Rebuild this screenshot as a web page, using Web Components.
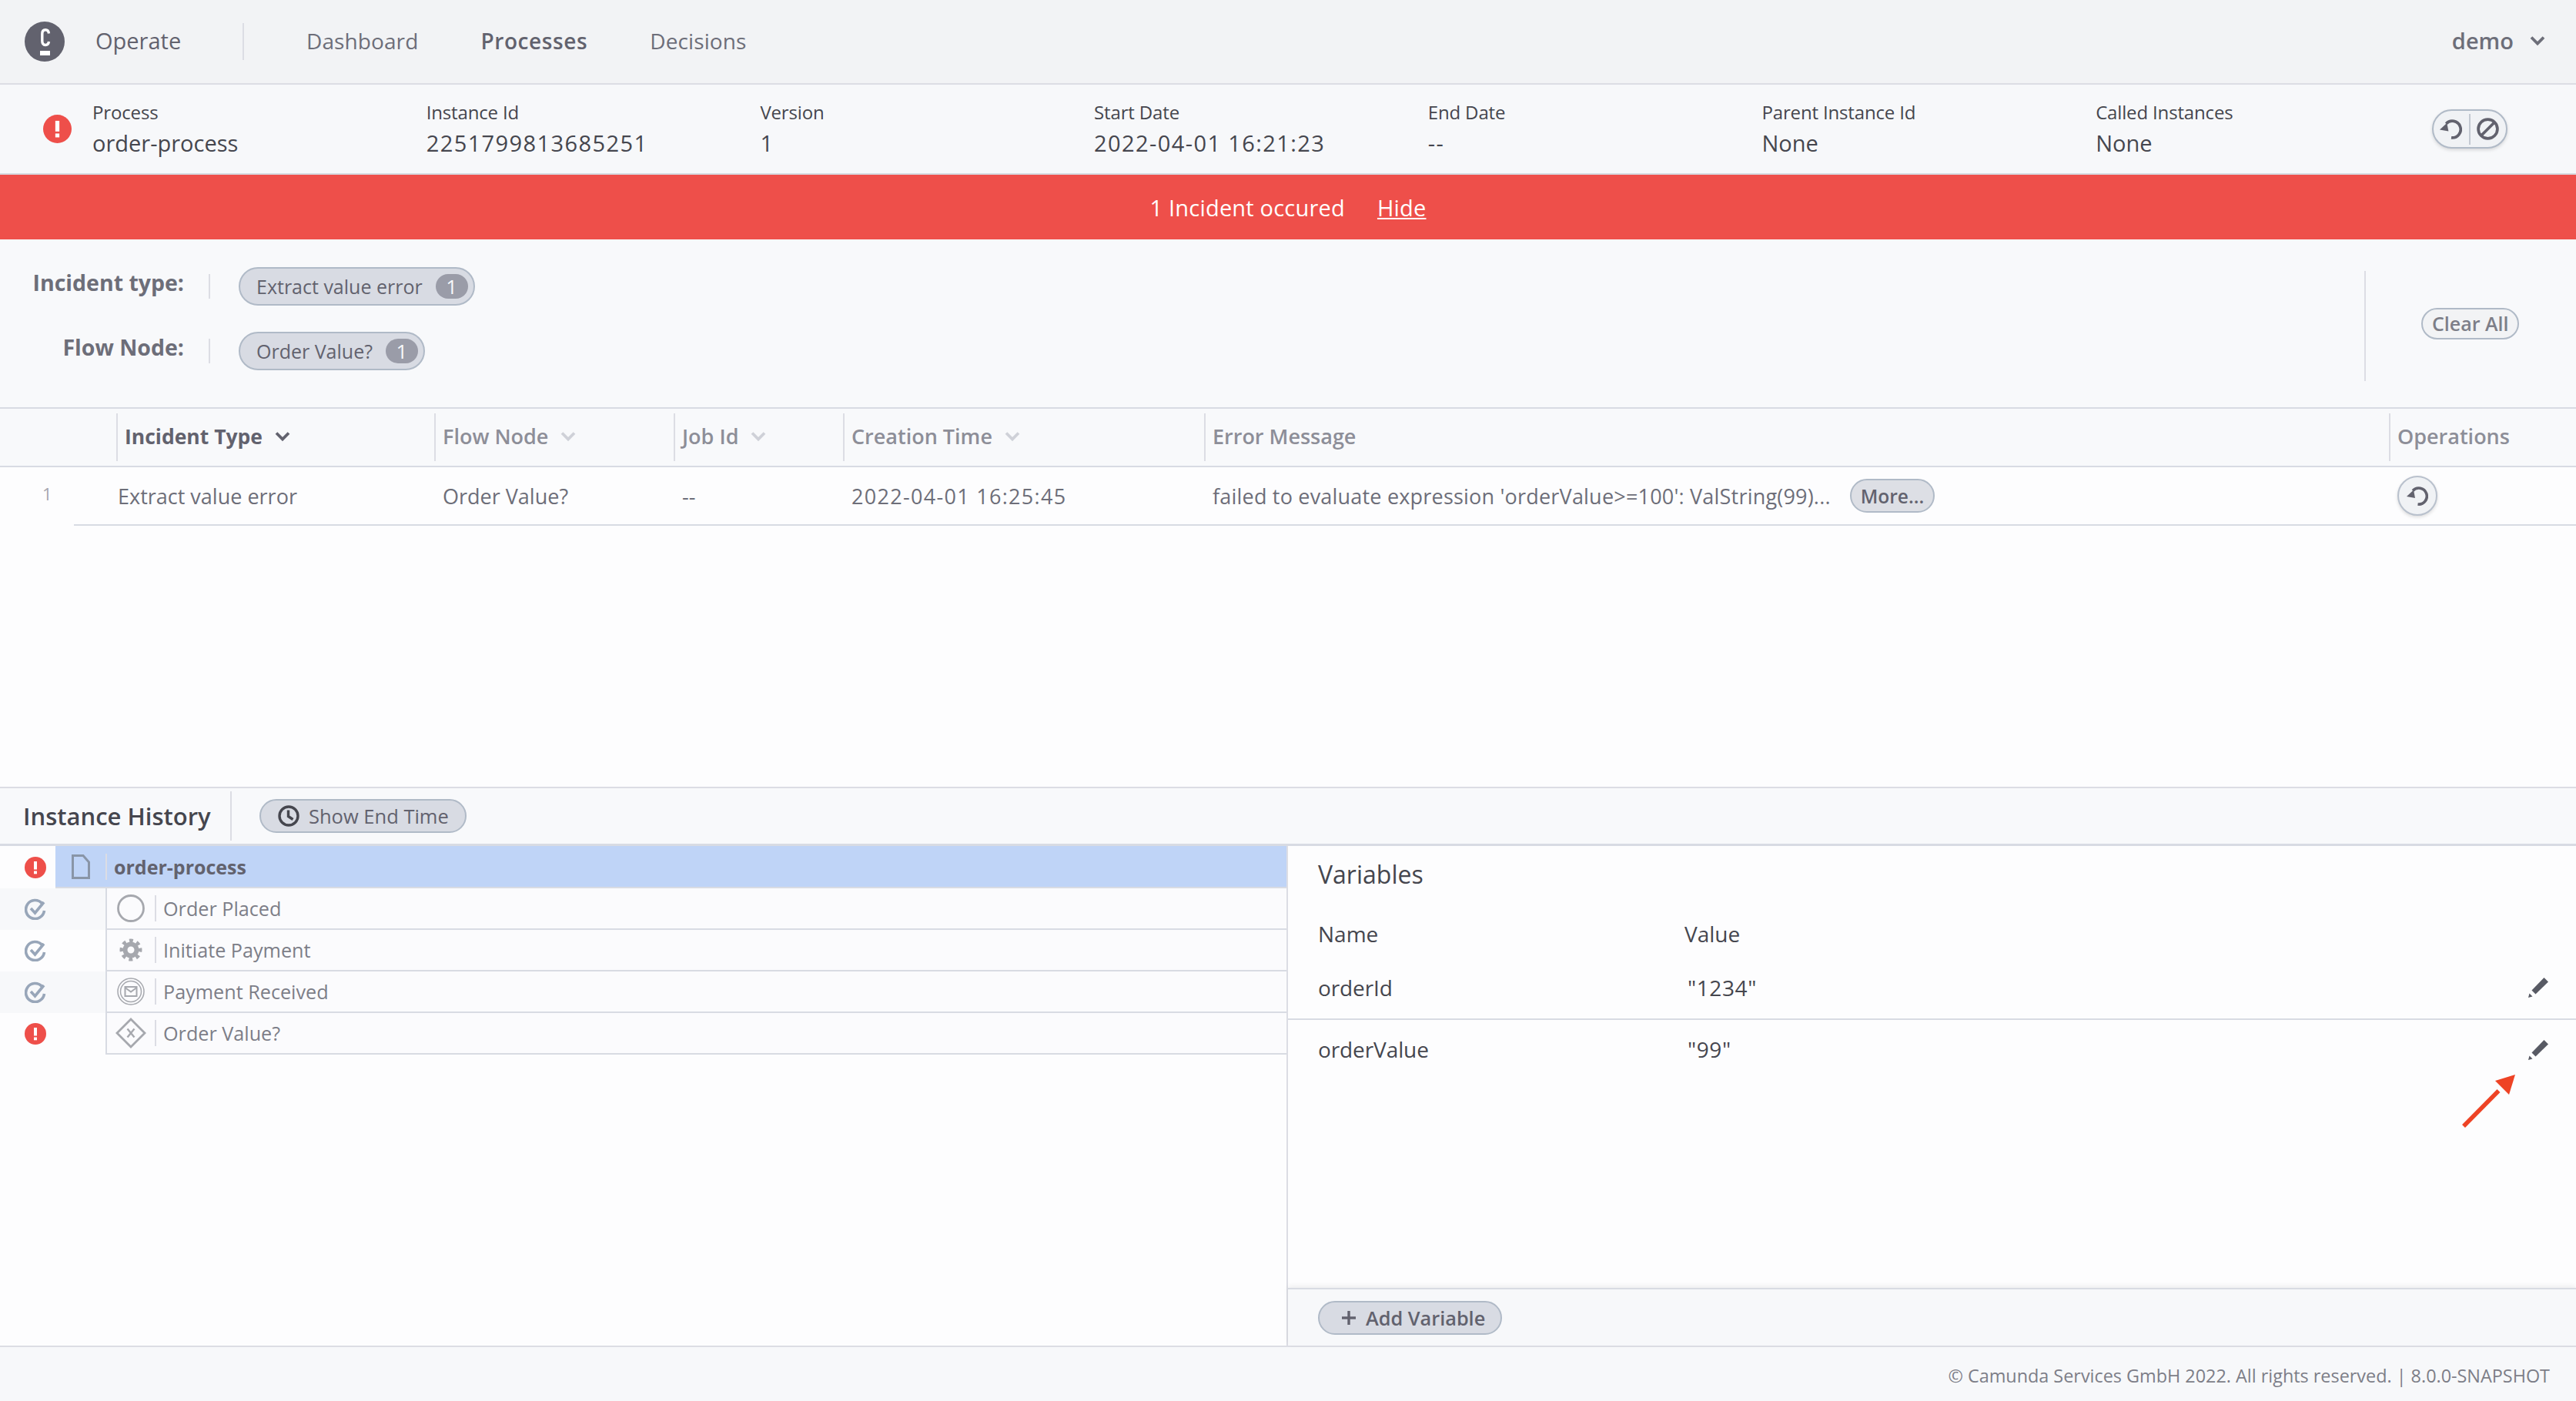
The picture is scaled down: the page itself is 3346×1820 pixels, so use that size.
<!DOCTYPE html>
<html lang="en">
<head>
<meta charset="utf-8">
<title>Operate</title>
<style>
  html, body { margin: 0; height: 100%; }
  body {
    font-family: "Open Sans", "Liberation Sans", sans-serif;
    font-size: 29px;
    color: #62626e;
    background: #fdfdfe;
  }
</style>
</head>
<body>
<operate-app></operate-app>

<script>
const ICONS = {
  error: `<svg viewBox="0 0 28 28"><circle cx="14" cy="14" r="14" fill="#ee4f4a"/><rect x="12" y="6" width="4" height="10.5" fill="#fff"/><rect x="12" y="18.5" width="4" height="3.8" fill="#fff"/></svg>`,
  check: `<svg viewBox="0 0 28 28" fill="none" stroke="#98a6b9" stroke-width="3.6"><path d="M22.500 6.500A12 12 0 1 0 25.500 16"/><path d="M8 13l5.500 6L25 5"/></svg>`,
  retry: `<svg viewBox="0 0 28 28" fill="none"><path d="M8 7.500A10.500 10.500 0 1 1 14.500 25" stroke="#62626e" stroke-width="3.6"/><path d="M0 15L9 6.500l2 10.500z" fill="#62626e"/></svg>`,
  cancel: `<svg viewBox="0 0 28 28" fill="none" stroke="#62626e" stroke-width="3.6"><circle cx="14" cy="14" r="12"/><path d="M6 22L22 6"/></svg>`,
  chevron: `<svg viewBox="0 0 20 14" fill="none" stroke="currentColor" stroke-width="3.8"><path d="M2 2.500l8 8 8-8"/></svg>`,
  clock: `<svg viewBox="0 0 28 28" fill="none" stroke="#45464e" stroke-width="3.4"><circle cx="14" cy="14" r="12"/><path d="M13.500 6.500v8l6 4"/></svg>`,
  plus: `<svg viewBox="0 0 20 20" fill="#62626e"><rect x="8.300" y="1" width="3.400" height="18"/><rect x="1" y="8.300" width="18" height="3.400"/></svg>`,
  pencil: `<svg viewBox="0 0 26 26" fill="#585a64"><path d="M20.500 0L26 5.500 9.500 21.500 4.500 16.500z"/><path d="M0 26l1.500-5.500 4 4z"/></svg>`,
  doc: `<svg viewBox="0 0 24 32" fill="none" stroke="#8995a7" stroke-width="3"><path d="M1.500 1.500H15L22.500 10V30.500H1.500z"/></svg>`,
  circle: `<svg viewBox="0 0 36 36" fill="none" stroke="#a6a8ae" stroke-width="2.800"><circle cx="18" cy="18" r="16.500"/></svg>`,
  gear: `<svg viewBox="0 0 36 36" fill="none" stroke="#a6a8ae"><circle cx="18" cy="18" r="11" stroke-width="7" stroke-dasharray="4.300 4.340" transform="rotate(-11 18 18)"/><circle cx="18" cy="18" r="7.500" stroke-width="6"/></svg>`,
  message: `<svg viewBox="0 0 36 36" fill="none" stroke="#a6a8ae" stroke-width="1.500"><circle cx="18" cy="18" r="17"/><circle cx="18" cy="18" r="13.500"/><rect x="10.500" y="12" width="15" height="12" stroke-width="2"/><path d="M10.500 13l7.500 5.500 7.500-5.500" stroke-width="2"/></svg>`,
  gateway: `<svg viewBox="0 0 40 40" fill="none" stroke="#a6a8ae" stroke-width="2.800"><path d="M20 2L38 20 20 38 2 20z"/><path d="M15.500 14.500l9 11M24.500 14.500l-9 11" stroke-width="2.400"/></svg>`
};

class OpIcon extends HTMLElement {
  constructor() {
    super();
    this.attachShadow({ mode: "open" });
  }
  connectedCallback() {
    const size = this.getAttribute("size") || 28;
    const height = this.getAttribute("height") || size;
    this.shadowRoot.innerHTML = `
      <style>
        :host { display: inline-flex; flex: none; width: ${size}px; height: ${height}px; }
        svg { display: block; width: 100%; height: 100%; }
      </style>
      ${ICONS[this.getAttribute("name")]}`;
  }
}
customElements.define("op-icon", OpIcon);

class PillButton extends HTMLElement {
  constructor() {
    super();
    this.attachShadow({ mode: "open" });
  }
  connectedCallback() {
    this.shadowRoot.innerHTML = `
      <style>
        :host {
          display: inline-flex;
          align-items: center;
          box-sizing: border-box;
          height: var(--pill-height, 44px);
          padding: var(--pill-padding, 0 20px);
          gap: var(--pill-gap, 12px);
          border: 2px solid #b0bac7;
          border-radius: 25px;
          background: #d8dbe3;
          color: #62626e;
          font-size: var(--pill-font, 25px);
          font-weight: var(--pill-weight, 400);
          letter-spacing: var(--pill-spacing, 0);
          white-space: nowrap;
        }
      </style>
      <slot></slot>`;
  }
}
customElements.define("pill-button", PillButton);

class AppHeader extends HTMLElement {
  constructor() {
    super();
    this.attachShadow({ mode: "open" });
  }
  connectedCallback() {
    this.shadowRoot.innerHTML = `
      <style>
        :host {
          display: flex;
          align-items: center;
          box-sizing: border-box;
          height: 110px;
          padding-left: 32px;
          padding-right: 40px;
          background: #f2f3f5;
          border-bottom: 2px solid #dcdde4;
          font-size: 29px;
          color: #6d6e79;
        }
        .brand {
          display: flex;
          align-items: center;
          gap: 40px;
          box-sizing: border-box;
          width: 285px;
          height: 48px;
          border-right: 2px solid #dcdde4;
          color: #62626e;
        }
        .logo { width: 52px; height: 52px; flex: none; display: block; }
        .brand span, nav, .user { margin-bottom: 3px; }
        nav { display: flex; gap: 81px; margin-left: 81px; font-size: 28px; letter-spacing: .1px; }
        .active { font-weight: 600; color: #62626e; letter-spacing: .6px; }
        .user {
          margin-left: auto;
          display: flex;
          align-items: center;
          gap: 21px;
          font-weight: 600;
          color: #6d6e79;
        }
      </style>
      <div class="brand">
        <svg class="logo" viewBox="0 0 52 52">
          <circle cx="26" cy="26" r="26" fill="#62626e"/>
          <path d="M31.500 15.500C31 11.500 29 10.800 27 10.800C24 10.800 22.800 13 22.800 16V25C22.800 28 24 30.500 27 30.500C29 30.500 31 29.500 31.500 26" fill="none" stroke="#fff" stroke-width="3.400"/>
          <rect x="20" y="38" width="13" height="6" fill="#fff"/>
        </svg>
        <span>Operate</span>
      </div>
      <nav>
        <span>Dashboard</span>
        <span class="active">Processes</span>
        <span>Decisions</span>
      </nav>
      <div class="user">
        <span>demo</span>
        <op-icon name="chevron" size="20" height="14"></op-icon>
      </div>`;
  }
}
customElements.define("app-header", AppHeader);

class InstanceHeader extends HTMLElement {
  constructor() {
    super();
    this.attachShadow({ mode: "open" });
  }
  connectedCallback() {
    const fields = [
      ["Process", "order-process"],
      ["Instance Id", "2251799813685251", "digits"],
      ["Version", "1"],
      ["Start Date", "2022-04-01 16:21:23", "digits"],
      ["End Date", "--", "digits"],
      ["Parent Instance Id", "None"],
      ["Called Instances", "None"]
    ];
    this.shadowRoot.innerHTML = `
      <style>
        :host {
          display: flex;
          align-items: center;
          box-sizing: border-box;
          height: 117px;
          padding-left: 56px;
          background: #f7f8fa;
          border-bottom: 2px solid #d6d9df;
          color: #45464e;
        }
        .status { width: 64px; flex: none; display: flex; }
        .fields { display: grid; grid-template-columns: repeat(7, 433.7px); margin-top: -4px; }
        .label { font-size: 24px; line-height: 40px; letter-spacing: -.15px; }
        .value { font-size: 29px; line-height: 40px; }
        .digits { letter-spacing: 1.4px; }
        .ops {
          display: flex;
          align-items: center;
          box-sizing: border-box;
          width: 98px;
          height: 51px;
          margin-left: 3px;
          border: 2px solid #b0bac7;
          border-radius: 26px;
          background: #f0f2f5;
          box-shadow: 0 2px 4px #0002;
        }
        .ops span { flex: 1; display: flex; justify-content: center; }
        .ops span + span { border-left: 2px solid #c3c9d2; height: 40px; align-items: center; }
      </style>
      <div class="status"><op-icon name="error" size="37"></op-icon></div>
      <div class="fields">
        ${fields.map(([label, value, cls]) => `
          <div><div class="label">${label}</div><div class="value ${cls || ""}">${value}</div></div>`).join("")}
      </div>
      <div class="ops">
        <span><op-icon name="retry" size="29"></op-icon></span>
        <span><op-icon name="cancel" size="29"></op-icon></span>
      </div>`;
  }
}
customElements.define("instance-header", InstanceHeader);

class IncidentBanner extends HTMLElement {
  constructor() {
    super();
    this.attachShadow({ mode: "open" });
  }
  connectedCallback() {
    this.shadowRoot.innerHTML = `
      <style>
        :host {
          display: flex;
          align-items: center;
          justify-content: center;
          gap: 42px;
          height: 84px;
          background: #ee4f4a;
          color: #fff;
          font-size: 29px;
          font-weight: 500;
          letter-spacing: .2px;
        }
      </style>
      <span>1 Incident occured</span>
      <u>Hide</u>`;
  }
}
customElements.define("incident-banner", IncidentBanner);

class IncidentFilters extends HTMLElement {
  constructor() {
    super();
    this.attachShadow({ mode: "open" });
  }
  connectedCallback() {
    const row = (label, name) => `
      <div class="row">
        <div class="label">${label}</div>
        <pill-button>${name}<span class="badge">1</span></pill-button>
      </div>`;
    this.shadowRoot.innerHTML = `
      <style>
        :host {
          display: flex;
          box-sizing: border-box;
          height: 218px;
          background: #f8f9fb;
          --pill-height: 50px;
          --pill-padding: 0 7px 0 21px;
          --pill-gap: 17px;
        }
        .rows { display: flex; flex-direction: column; gap: 34px; padding-top: 36px; }
        .row { display: flex; align-items: center; height: 50px; }
        .label {
          box-sizing: border-box;
          width: 273px;
          height: 32px;
          padding-right: 32px;
          border-right: 2px solid #dcdde4;
          margin-right: 37px;
          text-align: right;
          white-space: nowrap;
          font-weight: 700;
          font-size: 28.500px;
          line-height: 22px;
          color: #6d6e79;
        }
        .badge {
          display: flex;
          align-items: center;
          justify-content: center;
          width: 42px;
          height: 32px;
          border-radius: 16px;
          background: #9a9ca8;
          color: #f7f8fa;
          font-size: 26px;
        }
        .side {
          display: flex;
          align-items: center;
          box-sizing: border-box;
          margin: 41px 0 0 auto;
          width: 275px;
          height: 143px;
          padding-left: 72px;
          border-left: 2px solid #dcdde4;
        }
        .clear {
          --pill-height: 41px;
          --pill-padding: 0 12px;
          --pill-weight: 600;
          --pill-font: 25px;
          background: #f2f3f5;
          color: #7d7e88;
          margin-top: -7px;
        }
      </style>
      <div class="rows">
        ${row("Incident type:", "Extract value error")}
        ${row("Flow Node:", "Order Value?")}
      </div>
      <div class="side"><pill-button class="clear">Clear All</pill-button></div>`;
  }
}
customElements.define("incident-filters", IncidentFilters);

class IncidentTable extends HTMLElement {
  constructor() {
    super();
    this.attachShadow({ mode: "open" });
  }
  connectedCallback() {
    const head = (text, sort) => `
      <div class="th ${sort === "on" ? "on" : ""}">
        <span>${text}</span>
        ${sort ? `<op-icon name="chevron" size="20" height="14"></op-icon>` : ""}
      </div>`;
    this.shadowRoot.innerHTML = `
      <style>
        :host {
          display: block;
          flex: 1;
          background: #fdfdfe;
          border-top: 2px solid #d8dbe3;
          --cols: 413px 311px 220px 469px 1539px 1fr;
        }
        .head {
          display: grid;
          grid-template-columns: 151px var(--cols);
          align-items: center;
          box-sizing: border-box;
          height: 76px;
          background: #f8f9fb;
          border-bottom: 2px solid #d8dbe3;
        }
        .th {
          display: flex;
          align-items: center;
          gap: 16px;
          box-sizing: border-box;
          height: 62px;
          padding: 0 0 3px 9px;
          border-left: 2px solid #dcdde4;
          font-size: 27px;
          font-weight: 600;
          color: #8d8e98;
        }
        .th.on { color: #62626e; font-weight: 700; font-size: 26.500px; }
        .th:not(.on) op-icon { color: #cfd1d8; }
        .body { display: flex; height: 76px; }
        .num {
          flex: none;
          width: 96px;
          padding: 19px 0 0 55px;
          box-sizing: border-box;
          font-size: 22px;
          color: #a5a6ae;
        }
        .cells {
          flex: 1;
          display: grid;
          grid-template-columns: 55px var(--cols);
          align-items: center;
          border-bottom: 2px solid #d8dbe3;
          font-size: 27px;
          color: #6d6e79;
        }
        .cells > div { padding-left: 11px; white-space: nowrap; }
        .first { grid-column: 1 / 3; padding-left: 57px !important; }
        .date { letter-spacing: 1.3px; }
        .msg { display: flex; align-items: center; gap: 25px; letter-spacing: .2px; }
        .msg pill-button {
          --pill-padding: 0 12px;
          --pill-weight: 600;
          --pill-font: 24.500px;
          background: #dddfe5;
        }
        .retry {
          display: flex;
          align-items: center;
          justify-content: center;
          box-sizing: border-box;
          width: 52px;
          height: 52px;
          border: 2px solid #b9c1cd;
          border-radius: 50%;
          background: #f0f2f5;
          box-shadow: 0 2px 4px #0002;
        }
      </style>
      <div class="head">
        <div></div>
        ${head("Incident Type", "on")}
        ${head("Flow Node", "off")}
        ${head("Job Id", "off")}
        ${head("Creation Time", "off")}
        ${head("Error Message")}
        ${head("Operations")}
      </div>
      <div class="body">
        <div class="num">1</div>
        <div class="cells">
          <div class="first">Extract value error</div>
          <div>Order Value?</div>
          <div>--</div>
          <div class="date">2022-04-01 16:25:45</div>
          <div class="msg">
            <span>failed to evaluate expression 'orderValue&gt;=100': ValString(99)...</span>
            <pill-button>More...</pill-button>
          </div>
          <div><div class="retry"><op-icon name="retry" size="28"></op-icon></div></div>
        </div>
      </div>`;
  }
}
customElements.define("incident-table", IncidentTable);

class HistoryRow extends HTMLElement {
  constructor() {
    super();
    this.attachShadow({ mode: "open" });
  }
  connectedCallback() {
    const selected = this.hasAttribute("selected");
    const icon = this.getAttribute("icon");
    this.shadowRoot.innerHTML = `
      <style>
        :host {
          display: flex;
          height: ${selected ? 55 : 54}px;
          background: #fdfdfe;
          font-size: 25.200px;
          color: #7d7e88;
        }
        :host([shade]) .gutter { background: #f7f8fa; }
        .gutter {
          flex: none;
          box-sizing: border-box;
          width: ${selected ? 72 : 137}px;
          padding-left: 32px;
          display: flex;
          align-items: center;
        }
        .node {
          flex: 1;
          display: flex;
          align-items: center;
          box-sizing: border-box;
          background: #fbfbfd;
          border-left: 2px solid #d8dbe3;
          border-bottom: 2px solid #d8dbe3;
        }
        .glyph { width: 62px; flex: none; display: flex; justify-content: center; }
        .rule { height: 34px; padding-left: 9px; border-left: 2px solid #dcdde4; line-height: 34px; }
        :host([selected]) .node {
          background: #bfd4f7;
          border-left: 0;
          color: #62626e;
          font-weight: 700;
          font-size: 25px;
        }
        :host([selected]) .glyph { width: 65px; }
      </style>
      <div class="gutter"><op-icon name="${this.getAttribute("state")}" size="28"></op-icon></div>
      <div class="node">
        <div class="glyph"><op-icon name="${icon}" size="${selected ? 24 : icon === "gateway" ? 40 : 36}" height="${selected ? 32 : icon === "gateway" ? 40 : 36}"></op-icon></div>
        <div class="rule"><slot></slot></div>
      </div>`;
  }
}
customElements.define("history-row", HistoryRow);

class InstanceHistory extends HTMLElement {
  constructor() {
    super();
    this.attachShadow({ mode: "open" });
  }
  connectedCallback() {
    this.shadowRoot.innerHTML = `
      <style>
        :host {
          display: block;
          border-top: 2px solid #dcdde4;
          background: #fdfdfe;
        }
        .bar {
          display: flex;
          align-items: center;
          box-sizing: border-box;
          height: 75px;
          background: #f8f9fb;
          border-bottom: 3px solid #d8dbe3;
        }
        h2 {
          box-sizing: border-box;
          width: 301px;
          height: 64px;
          margin: 0;
          padding-left: 30px;
          border-right: 2px solid #dcdde4;
          font-size: 31px;
          font-weight: 600;
          line-height: 64px;
          white-space: nowrap;
          color: #45464e;
        }
        .toggle { margin-left: 36px; --pill-gap: 12px; --pill-padding: 0 21px 0 22px; --pill-font: 25.500px; }
        .main { display: grid; grid-template-columns: 1671px 1fr; height: 649px; }
      </style>
      <div class="bar">
        <h2>Instance History</h2>
        <pill-button class="toggle"><op-icon name="clock" size="28"></op-icon>Show End Time</pill-button>
      </div>
      <div class="main">
        <div>
          <history-row state="error" icon="doc" selected>order-process</history-row>
          <history-row state="check" icon="circle" shade>Order Placed</history-row>
          <history-row state="check" icon="gear">Initiate Payment</history-row>
          <history-row state="check" icon="message" shade>Payment Received</history-row>
          <history-row state="error" icon="gateway">Order Value?</history-row>
        </div>
        <variables-panel></variables-panel>
      </div>`;
  }
}
customElements.define("instance-history", InstanceHistory);

class VariablesPanel extends HTMLElement {
  constructor() {
    super();
    this.attachShadow({ mode: "open" });
  }
  connectedCallback() {
    const row = (name, value) => `
      <div class="row">
        <span class="name">${name}</span>
        <span class="value">${value}</span>
        <op-icon name="pencil" size="26"></op-icon>
      </div>`;
    this.shadowRoot.innerHTML = `
      <style>
        :host {
          position: relative;
          display: flex;
          flex-direction: column;
          border-left: 2px solid #dcdde4;
          color: #45464e;
          font-size: 28px;
        }
        .content { flex: 1; padding-left: 39px; }
        h3 { margin: 0; padding-top: 17px; font-size: 32px; font-weight: 500; line-height: 40px; }
        .names {
          display: grid;
          grid-template-columns: 476px 1fr;
          padding-top: 38px;
          line-height: 38px;
          height: 86px;
          box-sizing: border-box;
        }
        .list { margin-left: -39px; }
        .row {
          display: grid;
          grid-template-columns: 480px 1fr 26px;
          align-items: center;
          align-content: start;
          box-sizing: border-box;
          padding: 22px 36px 0 39px;
          height: 81px;
        }
        .row + .row { border-top: 2px solid #d8dbe3; padding-top: 19px; }
        .row + .row op-icon { margin-top: 2px; }
        .name { font-weight: 500; letter-spacing: -.1px; }
        .value { letter-spacing: .6px; }
        .foot {
          display: flex;
          align-items: center;
          box-sizing: border-box;
          height: 75px;
          padding-left: 39px;
          background: #f7f8fa;
          border-top: 2px solid #d8dbe3;
          box-shadow: 0 -3px 6px #0000000f;
          --pill-padding: 0 20px 0 28px;
          --pill-font: 25.300px;
          --pill-weight: 600;
        }
        .arrow { position: absolute; left: 1522px; top: 293px; width: 76px; height: 76px; }
      </style>
      <div class="content">
        <h3>Variables</h3>
        <div class="names"><span>Name</span><span>Value</span></div>
        <div class="list">
          ${row("orderId", "&quot;1234&quot;")}
          ${row("orderValue", "&quot;99&quot;")}
        </div>
      </div>
      <div class="foot">
        <pill-button><op-icon name="plus" size="20"></op-icon>Add Variable</pill-button>
      </div>
      <svg class="arrow" viewBox="0 0 76 76">
        <path d="M5 71L50.500 25" stroke="#ee4325" stroke-width="5.500" fill="none"/>
        <path d="M72 4L46 12 64 30z" fill="#ee4325"/>
      </svg>`;
  }
}
customElements.define("variables-panel", VariablesPanel);

class AppFooter extends HTMLElement {
  constructor() {
    super();
    this.attachShadow({ mode: "open" });
  }
  connectedCallback() {
    this.shadowRoot.innerHTML = `
      <style>
        :host {
          display: flex;
          align-items: center;
          justify-content: flex-end;
          box-sizing: border-box;
          height: 72px;
          padding: 4px 34px 0 0;
          background: #f7f8fa;
          border-top: 2px solid #dcdde4;
          font-size: 23.400px;
          color: #7d7e88;
        }
      </style>
      <span>© Camunda Services GmbH 2022. All rights reserved. | 8.0.0-SNAPSHOT</span>`;
  }
}
customElements.define("app-footer", AppFooter);

class OperateApp extends HTMLElement {
  constructor() {
    super();
    this.attachShadow({ mode: "open" });
  }
  connectedCallback() {
    this.shadowRoot.innerHTML = `
      <style>
        :host { display: flex; flex-direction: column; height: 1820px; overflow: hidden; }
      </style>
      <app-header></app-header>
      <instance-header></instance-header>
      <incident-banner></incident-banner>
      <incident-filters></incident-filters>
      <incident-table></incident-table>
      <instance-history></instance-history>
      <app-footer></app-footer>`;
  }
}
customElements.define("operate-app", OperateApp);
</script>
</body>
</html>
